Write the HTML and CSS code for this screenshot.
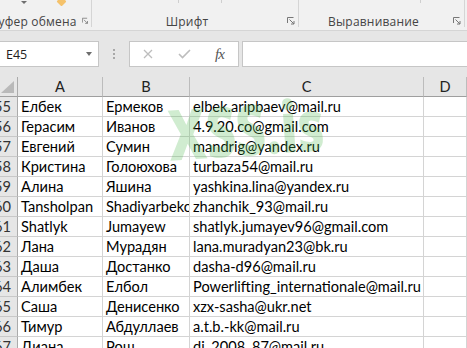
FILE: index.html
```html
<!DOCTYPE html>
<html lang="ru">
  <head>
    <meta charset="UTF-8" />
    <title>Книга1 - Excel</title>
    <link rel="stylesheet" href="styles.css">
  </head>
  <body>
    <div class="ribbon">
      <div class="group group-clipboard">
        <div class="group-top">
          <span class="mini-arrow"></span>
          <span class="brush"></span>
        </div>
        <div class="group-label">
          <span>Буфер обмена</span>
          <svg class="launcher" width="8" height="8" viewBox="0 0 8 8"><path d="M0.5 6V0.5H6.5" /><path d="M2.5 2.5L7 7M7 4V7H4" /></svg>
        </div>
      </div>
      <div class="group group-font">
        <div class="group-top">
          <span class="tick tick-1"></span>
          <span class="tick tick-2"></span>
        </div>
        <div class="group-label">
          <span>Шрифт</span>
          <svg class="launcher" width="8" height="8" viewBox="0 0 8 8"><path d="M0.5 6V0.5H6.5" /><path d="M2.5 2.5L7 7M7 4V7H4" /></svg>
        </div>
      </div>
      <div class="group group-align">
        <div class="group-top">
          <span class="tick tick-3"></span>
        </div>
        <div class="group-label">
          <span>Выравнивание</span>
          <svg class="launcher" width="8" height="8" viewBox="0 0 8 8"><path d="M0.5 6V0.5H6.5" /><path d="M2.5 2.5L7 7M7 4V7H4" /></svg>
        </div>
      </div>
      <div class="group group-rest"></div>
    </div>

    <div class="formula-bar">
      <div class="name-box">
        <span>E45</span>
        <i class="caret"></i>
      </div>
      <div class="grip"><i></i><i></i><i></i></div>
      <div class="fx-buttons">
        <svg class="btn-cancel" width="10" height="10" viewBox="0 0 10 10"><path d="M1 1L9 9M9 1L1 9" /></svg>
        <svg class="btn-enter" width="13" height="10" viewBox="0 0 13 10"><path d="M1 5L4.5 8.5L12 1" /></svg>
        <span class="fx">fx</span>
      </div>
      <div class="formula-input"></div>
    </div>

    <div class="sheet-wrap">
      <div class="sheet">
        <div class="corner">
          <svg width="13" height="12" viewBox="0 0 13 12"><polygon points="13,0 13,12 0,12" /></svg>
        </div>
        <div class="col-head">A</div>
        <div class="col-head">B</div>
        <div class="col-head">C</div>
        <div class="col-head">D</div>

        <div class="row-head"><span>55</span></div>
        <div class="cell">Елбек</div>
        <div class="cell">Ермеков</div>
        <div class="cell">elbek.aripbaev@mail.ru</div>
        <div class="cell"></div>

        <div class="row-head"><span>56</span></div>
        <div class="cell">Герасим</div>
        <div class="cell">Иванов</div>
        <div class="cell">4.9.20.co@gmail.com</div>
        <div class="cell"></div>

        <div class="row-head"><span>57</span></div>
        <div class="cell">Евгений</div>
        <div class="cell">Сумин</div>
        <div class="cell">mandrig@yandex.ru</div>
        <div class="cell"></div>

        <div class="row-head"><span>58</span></div>
        <div class="cell">Кристина</div>
        <div class="cell">Голоюхова</div>
        <div class="cell">turbaza54@mail.ru</div>
        <div class="cell"></div>

        <div class="row-head"><span>59</span></div>
        <div class="cell">Алина</div>
        <div class="cell">Яшина</div>
        <div class="cell">yashkina.lina@yandex.ru</div>
        <div class="cell"></div>

        <div class="row-head"><span>60</span></div>
        <div class="cell">Tansholpan</div>
        <div class="cell">Shadiyarbekov</div>
        <div class="cell">zhanchik_93@mail.ru</div>
        <div class="cell"></div>

        <div class="row-head"><span>61</span></div>
        <div class="cell">Shatlyk</div>
        <div class="cell">Jumayew</div>
        <div class="cell">shatlyk.jumayev96@gmail.com</div>
        <div class="cell"></div>

        <div class="row-head"><span>62</span></div>
        <div class="cell">Лана</div>
        <div class="cell">Мурадян</div>
        <div class="cell">lana.muradyan23@bk.ru</div>
        <div class="cell"></div>

        <div class="row-head"><span>63</span></div>
        <div class="cell">Даша</div>
        <div class="cell">Достанко</div>
        <div class="cell">dasha-d96@mail.ru</div>
        <div class="cell"></div>

        <div class="row-head"><span>64</span></div>
        <div class="cell">Алимбек</div>
        <div class="cell">Елбол</div>
        <div class="cell">Powerlifting_internationale@mail.ru</div>
        <div class="cell"></div>

        <div class="row-head"><span>65</span></div>
        <div class="cell">Саша</div>
        <div class="cell">Денисенко</div>
        <div class="cell">xzx-sasha@ukr.net</div>
        <div class="cell"></div>

        <div class="row-head"><span>66</span></div>
        <div class="cell">Тимур</div>
        <div class="cell">Абдуллаев</div>
        <div class="cell">a.t.b.-kk@mail.ru</div>
        <div class="cell"></div>

        <div class="row-head"><span>67</span></div>
        <div class="cell">Диана</div>
        <div class="cell">Рош</div>
        <div class="cell">dj_2008_87@mail.ru</div>
        <div class="cell"></div>
      </div>

      <div class="watermark">XSS.is</div>
    </div>
  </body>
</html>
```

FILE: styles.css
```css
* {
  box-sizing: border-box;
}

body {
  margin: 0;
  width: 467px;
  height: 348px;
  overflow: hidden;
  background: #e6e6e6;
  font-family: "Open Sans", "Noto Sans", sans-serif;
}

/* ленточка сверху */
.ribbon {
  display: flex;
  height: 31px;
  margin-left: -9px;
  background: #f1f1f1;
  border-bottom: 1px solid #d5d5d5;
}

.group {
  display: flex;
  flex-direction: column;
  justify-content: space-between;
  height: 30px;
  background: linear-gradient(#d5d5d5, #d5d5d5) right top / 1px 27px no-repeat;
}

.group-clipboard {
  width: 101px;
}

.group-font {
  width: 207px;
}

.group-align {
  width: 166px;
}

.group-rest {
  flex: 1;
  background: none;
}

.group-top {
  display: flex;
  align-items: flex-start;
  height: 6px;
}

.mini-arrow {
  margin-left: 30px;
  margin-top: 1px;
  width: 0;
  height: 0;
  border-left: 3px solid transparent;
  border-right: 3px solid transparent;
  border-top: 3px solid #6f6f6f;
}

.brush {
  margin-left: 31px;
  margin-top: -2px;
  width: 7px;
  height: 7px;
  background: #f5c26b;
  transform: rotate(45deg);
  border-radius: 1px;
}

.tick {
  width: 1px;
  height: 3px;
  background: #cfcfcf;
}

.tick-1 {
  margin-left: 86px;
}

.tick-2 {
  margin-left: 42px;
}

.tick-3 {
  margin-left: 121px;
}

.group-label {
  display: flex;
  align-items: center;
  height: 16px;
  padding-right: 4px;
  margin-bottom: 1px;
}

.group-label span {
  flex: 1;
  text-align: center;
  white-space: nowrap;
  font-size: 12px;
  color: #444;
  letter-spacing: 0.2px;
}

.launcher {
  margin-left: 5px;
  fill: none;
  stroke: #777;
  stroke-width: 1;
}

/* строка формул */
.formula-bar {
  display: flex;
  align-items: center;
  height: 46px;
  padding: 10px 0;
}

.name-box {
  display: flex;
  align-items: center;
  width: 100px;
  height: 26px;
  margin-left: -1px;
  padding: 0 6px 0 6px;
  background: #fff;
  border: 1px solid #c6c6c6;
  font-size: 12.5px;
  color: #222;
}

.caret {
  margin-left: auto;
  width: 0;
  height: 0;
  border-left: 3.5px solid transparent;
  border-right: 3.5px solid transparent;
  border-top: 4px solid #6d6d6d;
}

.grip {
  display: flex;
  flex-direction: column;
  align-items: center;
  gap: 2px;
  width: 30px;
}

.grip i {
  width: 2px;
  height: 2px;
  background: #a8a8a8;
}

.fx-buttons {
  display: flex;
  align-items: center;
  width: 110px;
  height: 26px;
  background: #fff;
  border: 1px solid #c6c6c6;
}

.btn-cancel {
  margin-left: 13px;
  fill: none;
  stroke: #bdbdbd;
  stroke-width: 1.3;
}

.btn-enter {
  margin-left: 25px;
  fill: none;
  stroke: #bdbdbd;
  stroke-width: 1.6;
}

.fx {
  margin-left: 24px;
  font-family: "Liberation Serif", serif;
  font-style: italic;
  font-size: 15px;
  color: #555;
  letter-spacing: -1px;
}

.formula-input {
  flex: 1;
  height: 26px;
  margin-left: 3px;
  margin-right: -5px;
  background: #fff;
  border: 1px solid #c6c6c6;
}

/* лист */
.sheet-wrap {
  position: relative;
}

.sheet {
  display: grid;
  grid-template-columns: 18px 85px 87px 234px 1fr;
  grid-auto-rows: 20px;
  font-family: Lato, "Liberation Sans", sans-serif;
  font-size: 14.6px;
}

.corner,
.col-head {
  background: #e6e6e6;
  border-bottom: 1px solid #9f9f9f;
}

.corner {
  display: flex;
  align-items: flex-end;
  justify-content: flex-end;
  padding: 0 3px 3px 0;
  border-right: 1px solid #ababab;
}

.corner svg {
  fill: #b9b9b9;
}

.col-head {
  display: flex;
  align-items: center;
  justify-content: center;
  color: #222;
  border-right: 1px solid #bcbcbc;
}

.row-head {
  display: flex;
  align-items: center;
  justify-content: flex-end;
  overflow: hidden;
  padding-right: 6px;
  background: #e6e6e6;
  color: #333;
  border-right: 1px solid #ababab;
  border-bottom: 1px solid #c8c8c8;
}

.cell {
  display: flex;
  align-items: center;
  overflow: hidden;
  white-space: nowrap;
  padding-left: 3px;
  background: #fff;
  color: #000;
  border-right: 1px solid #d4d4d4;
  border-bottom: 1px solid #d4d4d4;
}

.watermark {
  position: absolute;
  left: 166px;
  top: 22px;
  font-family: "Open Sans", sans-serif;
  font-weight: 800;
  font-size: 70px;
  line-height: 1;
  color: rgba(80, 185, 80, 0.27);
  transform: rotate(-4deg) scaleX(0.74);
  transform-origin: left top;
  pointer-events: none;
}
```
